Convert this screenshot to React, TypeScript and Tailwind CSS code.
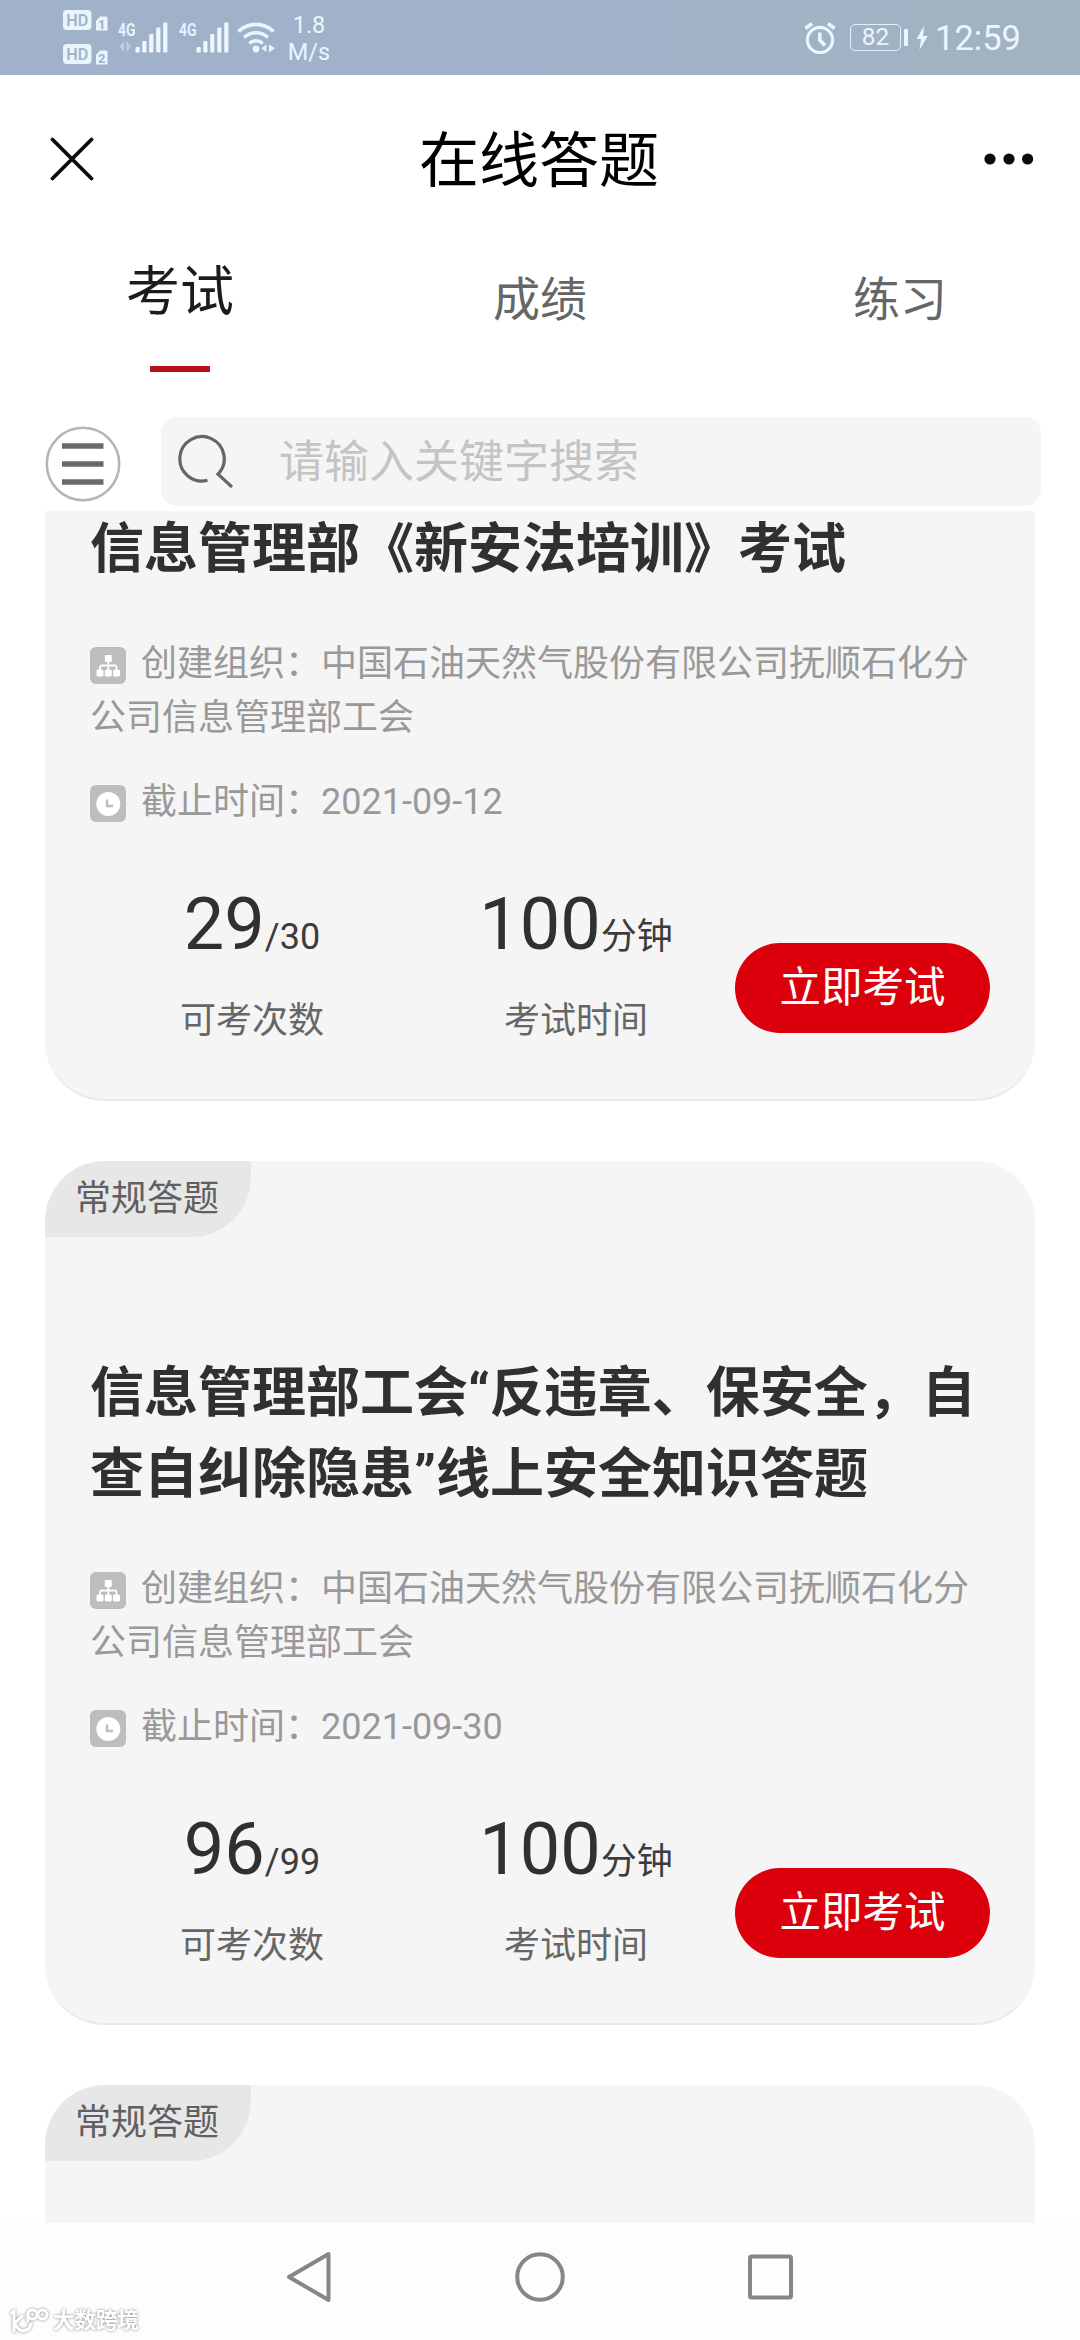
import React from 'react';

type Exam = {
  tag?: string;
  title: string;
  deadline: string;
  left: string;
  total: string;
};

const ORG = '中国石油天然气股份有限公司抚顺石化分公司信息管理部工会';

const exams: Exam[] = [
  { title: '信息管理部《新安法培训》考试', deadline: '2021-09-12', left: '29', total: '30' },
  {
    tag: '常规答题',
    title: '信息管理部工会“反违章、保安全，自查自纠除隐患”线上安全知识答题',
    deadline: '2021-09-30',
    left: '96',
    total: '99',
  },
];

function SimBadge({ n }: { n: string }) {
  return (
    <svg className="h-[21px] w-[45px] overflow-visible" viewBox="0 0 45 21">
      <rect x="0" y="0" width="28.5" height="20" rx="4" fill="#e9f4ff" />
      <text x="14.2" y="16" textAnchor="middle" fontSize="17" fontWeight="500" textLength="22" lengthAdjust="spacingAndGlyphs" fill="#9fb1c4">HD</text>
      <path d="M33 11 L37 6.5 H43 Q44.5 6.5 44.5 8 V20.5 H33 Z" fill="#e9f4ff" />
      <text x="38.8" y="18.5" textAnchor="middle" fontSize="13" fontWeight="700" fill="#9fb1c4">{n}</text>
    </svg>
  );
}

function Signal({ arrows }: { arrows?: boolean }) {
  return (
    <svg className="h-[31px] w-[51px] overflow-visible" viewBox="0 0 51 31">
      <text x="0" y="14" fontSize="18.5" fontWeight="600" textLength="17.5" lengthAdjust="spacingAndGlyphs" fill="#e9f4ff">4G</text>
      {arrows && (
        <g fill="#bccddb">
          <path d="M6 19 V30 L1.5 24.5 Z" />
          <path d="M8.5 19 V30 L13 24.5 Z" />
        </g>
      )}
      <g fill="#eef7ff">
        <rect x="17.5" y="25" width="4.2" height="5.5" rx="1" />
        <rect x="24.3" y="19" width="4.2" height="11.5" rx="1" />
        <rect x="31.2" y="12" width="4.2" height="18.5" rx="1" />
        <rect x="38.2" y="5.5" width="4.2" height="25" rx="1" />
        <rect x="45.2" y="0.5" width="4.2" height="30" rx="1" />
      </g>
    </svg>
  );
}

function Wifi() {
  return (
    <svg className="h-[31px] w-[39px]" viewBox="0 0 39 31" fill="none" stroke="#e9f4ff" strokeWidth="3.6">
      <path d="M1.5 9.5 A25 25 0 0 1 36.5 9.5" />
      <path d="M7 15.5 A17.5 17.5 0 0 1 31 15.5" />
      <path d="M12.3 21.3 A10 10 0 0 1 25.7 21.3" />
      <circle cx="19" cy="27" r="3.4" fill="#e9f4ff" stroke="none" />
      <path d="M29.3 22.5 V30 L24.5 26.2 Z" fill="#e9f4ff" stroke="none" />
      <path d="M32 22.5 V30.5 L38 26.2 Z" fill="#e9f4ff" stroke="none" />
    </svg>
  );
}

function StatusBar() {
  return (
    <header className="flex h-[75px] shrink-0 items-center bg-gradient-to-r from-[#9fb2ca] via-[#a0b1c9] to-[#a1b3c0] pl-[63px] pr-[57px] text-[#eaf5ff]">
      <div className="flex flex-col gap-[13px]">
        <SimBadge n="1" />
        <SimBadge n="2" />
      </div>
      <div className="ml-[10px] flex items-center gap-[10px]">
        <Signal arrows />
        <Signal />
      </div>
      <div className="ml-[7px]"><Wifi /></div>
      <div className="ml-[11px] mt-[2px] w-[44px] text-center text-[23.5px] leading-[27px]">
        <div>1.8</div>
        <div>M/s</div>
      </div>
      <svg className="ml-auto h-[32px] w-[32px]" viewBox="0 0 32 32" fill="none" stroke="#eaf5ff" strokeWidth="3.2">
        <circle cx="16" cy="18" r="12.6" />
        <path d="M15.8 10.5 V18 L21 23.5" strokeWidth="3.6" />
        <path d="M1.5 6.5 L8 1.5 M24 1.5 L30.5 6.5" strokeWidth="3.6" />
      </svg>
      <div className="ml-[14px] flex h-[27px] w-[51px] items-center justify-center rounded-[5px] border-[1.5px] border-[#e2f0fa] text-[24.5px] leading-none">82</div>
      <div className="ml-[3px] h-[17px] w-[4px] rounded-[1px] bg-[#eaf5ff]" />
      <svg className="ml-[8px] h-[24px] w-[12px]" viewBox="0 0 12 24" fill="#eaf5ff">
        <path d="M8 0 L0.5 13 H5 L3.5 24 L11.8 10 H7 Z" />
      </svg>
      <div className="ml-[7px] w-[88px] whitespace-nowrap text-[34.5px] leading-[40px]">12:59</div>
    </header>
  );
}

function NavBar() {
  return (
    <div className="flex h-[167px] shrink-0 items-center justify-between pl-[50px] pr-[46px]">
      <svg className="h-[44px] w-[44px]" viewBox="0 0 44 44" stroke="#0a0a0a" strokeWidth="3.8" strokeLinecap="round">
        <path d="M2.5 2.5 L41.5 41.5 M41.5 2.5 L2.5 41.5" />
      </svg>
      <h1 className="mt-[6px] text-[60px] leading-[80px] text-black">在线答题</h1>
      <svg className="h-[12px] w-[50px]" viewBox="0 0 50 12" fill="#0a0a0a">
        <circle cx="6" cy="6" r="5.6" />
        <circle cx="25" cy="6" r="5.6" />
        <circle cx="43.6" cy="6" r="5.6" />
      </svg>
    </div>
  );
}

function Tabs() {
  return (
    <div className="grid h-[130px] shrink-0 grid-cols-3">
      <div className="flex flex-col items-center">
        <span className="mt-[11px] text-[54px] leading-[80px] text-[#1c1c1c]">考试</span>
        <span className="mt-[33px] h-[6px] w-[60px] bg-[#b80f1b]" />
      </div>
      {['成绩', '练习'].map((t) => (
        <div key={t} className="flex justify-center">
          <span className="mt-[28px] text-[47px] leading-[60px] text-[#666]">{t}</span>
        </div>
      ))}
    </div>
  );
}

function SearchRow() {
  return (
    <div className="mt-[45px] flex h-[89px] shrink-0 items-center pl-[45px] pr-[39px]">
      <svg className="mt-[4px] h-[76px] w-[76px]" viewBox="0 0 76 76" fill="none">
        <circle cx="38" cy="38" r="36.2" stroke="#b5b5b5" strokeWidth="2.6" />
        <path d="M17 20 H58.5 M17 38 H58.5 M17 56 H58.5" stroke="#6a6a6a" strokeWidth="5.4" />
      </svg>
      <div className="ml-[40px] flex h-full flex-1 items-center rounded-[16px] bg-[#f5f5f5] pl-[17px]">
        <svg className="-mt-[2px] h-[54px] w-[56px]" viewBox="0 0 56 54" fill="none" stroke="#666" strokeWidth="3.2">
          <path d="M29.5 46.3 A22.2 22.2 0 1 1 40 40.2 L54 53" />
        </svg>
        <span className="ml-[45px] mt-[3px] text-[45px] leading-[60px] text-[#c4c4c4]">请输入关键字搜索</span>
      </div>
    </div>
  );
}

function OrgIcon() {
  return (
    <svg className="mr-[15px] inline-block h-[37px] w-[36px] align-[-8px]" viewBox="0 0 36 37">
      <rect width="36" height="37" rx="6" fill="#bdbdbd" />
      <g fill="#fff">
        <rect x="14.8" y="8" width="7" height="7" rx="1" />
        <rect x="6.5" y="22.5" width="7" height="7" rx="1.5" />
        <rect x="14.8" y="22.5" width="7" height="7" rx="1.5" />
        <rect x="23" y="22.5" width="7" height="7" rx="1.5" />
      </g>
      <path d="M18.3 14 V23 M10 23 V20.5 Q10 18.5 12 18.5 H24.5 Q26.5 18.5 26.5 20.5 V23" fill="none" stroke="#fff" strokeWidth="1.8" />
    </svg>
  );
}

function ClockIcon() {
  return (
    <svg className="mr-[15px] inline-block h-[37px] w-[36px] align-[-8px]" viewBox="0 0 36 37">
      <rect width="36" height="37" rx="6" fill="#bdbdbd" />
      <circle cx="18.3" cy="19" r="12" fill="#fff" />
      <path d="M17 14.5 V21 H23" fill="none" stroke="#bdbdbd" strokeWidth="2.4" />
    </svg>
  );
}

function Tag({ children }: { children: React.ReactNode }) {
  return (
    <div className="flex h-[76px] w-[206px] items-center justify-center rounded-br-[60px] rounded-tl-[60px] bg-[#e7e7e7] text-[36px] leading-[54px] text-[#606060]">
      <span className="-mt-[1px] mr-[2px]">{children}</span>
    </div>
  );
}

function Stat({ value, unit, label }: { value: string; unit: string; label: string }) {
  return (
    <div className="w-[324px] shrink-0 text-center">
      <div className="text-[36px] leading-[84px] text-[#3c3c3c]">
        <span className="text-[72px] text-[#303030]">{value}</span>
        {unit}
      </div>
      <div className="mt-[15px] text-[36px] leading-[54px] text-[#666]">{label}</div>
    </div>
  );
}

function ExamCard({ exam }: { exam: Exam }) {
  return (
    <article
      className={
        exam.tag
          ? 'mt-[60px] h-[864px] shrink-0 rounded-[60px] border-b-2 border-[#e9e9e9] bg-[#f5f5f5]'
          : 'h-[590px] shrink-0 rounded-b-[60px] border-b-2 border-[#e9e9e9] bg-[#f5f5f5]'
      }
    >
      {exam.tag && <Tag>{exam.tag}</Tag>}
      <div className={exam.tag ? 'px-[45px] pt-[116px]' : 'px-[45px]'}>
        <h2 className={exam.tag ? 'text-[54px] font-bold leading-[81px] text-[#303030]' : '-mt-[2px] text-[54px] font-bold leading-[81px] text-[#303030]'}>
          {exam.title}
        </h2>
        <p className="mt-[47px] text-[36px] leading-[54px] text-[#999]">
          <OrgIcon />{`创建组织：${ORG}`}
        </p>
        <p className="mt-[30px] text-[36px] leading-[54px] text-[#999]">
          <ClockIcon />{`截止时间：${exam.deadline}`}
        </p>
        <div className="mt-[54px] flex">
          <Stat value={exam.left} unit={'/' + exam.total} label="可考次数" />
          <Stat value="100" unit="分钟" label="考试时间" />
          <button className="-ml-[3px] mt-[60px] h-[90px] w-[255px] shrink-0 rounded-full bg-[#dc000c] text-[41.5px] leading-[60px] text-white">
            立即考试
          </button>
        </div>
      </div>
    </article>
  );
}

function SystemNav() {
  return (
    <footer className="relative flex h-[117px] shrink-0 items-center justify-center gap-[182px] bg-[#fdfdfd] pb-[9px]">
      <svg className="h-[52px] w-[46px]" viewBox="0 0 46 52" fill="none" stroke="#868686" strokeWidth="4" strokeLinejoin="round">
        <path d="M42.5 3 V49 L3 26 Z" />
      </svg>
      <svg className="h-[52px] w-[52px]" viewBox="0 0 52 52" fill="none" stroke="#868686" strokeWidth="4">
        <circle cx="26" cy="26" r="22.8" />
      </svg>
      <svg className="h-[46px] w-[46px]" viewBox="0 0 46 46" fill="none" stroke="#868686" strokeWidth="4">
        <rect x="2" y="2.5" width="41" height="41" rx="1.5" />
      </svg>
      <div className="absolute bottom-[5px] left-[9px] flex items-center gap-[4px] [filter:drop-shadow(0_0_1.5px_#8a8a8a)]">
        <svg className="h-[28px] w-[40px]" viewBox="0 0 40 28" fill="none" stroke="#fff" strokeWidth="3" strokeLinecap="round">
          <path d="M2.5 6 L5 4.5 V24 M13 9 L6 16 Q9 25 16 23.5 Q21.5 22 21.5 17" />
          <circle cx="23.5" cy="7.5" r="4.6" />
          <circle cx="33.5" cy="7.5" r="4.6" />
          <path d="M18.8 8 V14" />
        </svg>
        <span className="text-[21.5px] font-bold leading-[28px] text-white">大数跨境</span>
      </div>
    </footer>
  );
}

export default function App() {
  return (
    <div className="flex h-[2340px] w-[1080px] flex-col overflow-hidden bg-white font-['Roboto','Noto_Sans_CJK_SC',sans-serif]">
      <StatusBar />
      <NavBar />
      <Tabs />
      <SearchRow />
      <main className="mt-[5px] flex min-h-0 flex-1 flex-col overflow-hidden px-[45px]">
        {exams.map((e) => (
          <ExamCard key={e.title} exam={e} />
        ))}
        <article className="mt-[60px] h-[200px] shrink-0 rounded-t-[60px] bg-[#f5f5f5]">
          <Tag>常规答题</Tag>
        </article>
      </main>
      <SystemNav />
    </div>
  );
}
